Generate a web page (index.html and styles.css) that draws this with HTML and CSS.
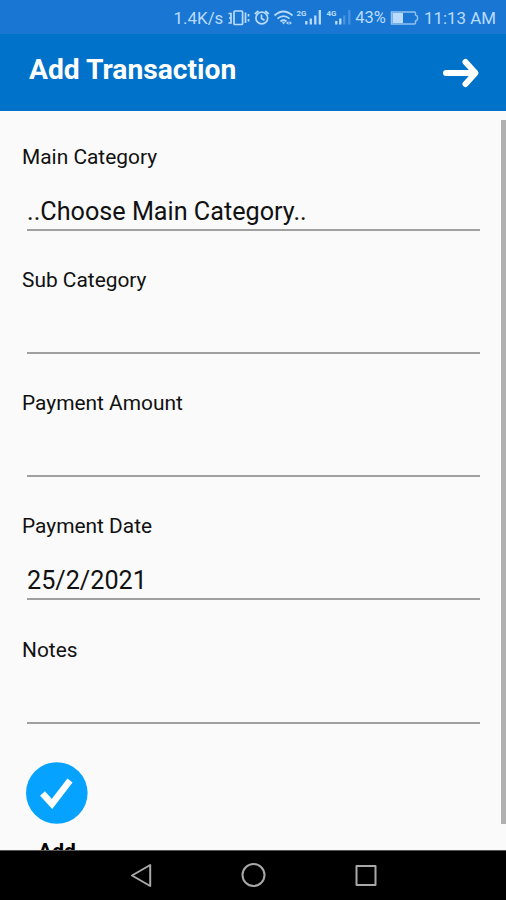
FILE: index.html
```html
<!DOCTYPE html>
<html lang="en">
<head>
  <meta charset="UTF-8" />
  <meta name="viewport" content="width=device-width, initial-scale=1.0"/>
  <title>Add Transaction</title>
  <link rel="stylesheet" href="styles.css">
</head>
<body>
  <div class="status-bar">
    <span class="speed">1.4K/s</span>
    <svg class="status-icons" width="125" height="24" viewBox="228 6 125 24" fill="none" stroke="currentColor" stroke-width="1.7">
      <!-- vibrate -->
      <rect x="235" y="11" width="8.6" height="13.5" rx="1"/>
      <path d="M229.5 13.5h2.500v9.500h-2.500M230 18h2M246.500 12.500v10.500M249.500 14v2.500M249.500 19v2.500"/>
      <!-- alarm -->
      <circle cx="262.8" cy="18" r="5.9"/>
      <path d="M262.5 14.5v4l3 1.8M255.8 14l3.6-3.2M269.8 14l-3.6-3.2"/>
      <!-- wifi -->
      <path d="M275.5 15.5q9-8 18 0M278.5 18.7q6-5.2 12 0M281.5 21.5q3-2.5 6 0"/>
      <path d="M282.8 22.3h3.5l-1.7 2.2zM287 23l2.5-1.8v3.6zM293 23l-2.5-1.8v3.6z" fill="currentColor" stroke="none"/>
      <!-- signal bars -->
      <path d="M307.3 21v3.5M311.8 18.5v6M316.3 15.5v9M320.8 10v14.5M337.3 21v3.5M341.3 18.5v6" stroke-width="2.3"/>
      <path d="M345.3 15.5v9M350.3 10v14.5" stroke-width="2.3" opacity=".3"/>
      <g class="net-type" fill="currentColor" stroke="none">
        <text x="297.5" y="16">2G</text>
        <text x="327.5" y="16">4G</text>
      </g>
    </svg>
    <span class="percent">43%</span>
    <svg class="battery" width="30" height="16" viewBox="0 0 30 16" fill="none">
      <path d="M1.5 2h23q1 0 1 1v2q2 .5 2 2v2q0 1.500-2 2v2q0 1-1 1h-23z" stroke="currentColor" stroke-width="1.5" opacity=".75"/>
      <path d="M2.5 3h10.5v10h-10.5z" fill="currentColor"/>
    </svg>
    <span class="clock">11:13 AM</span>
  </div>

  <div class="header">
    <h1>Add Transaction</h1>
    <svg width="38" height="32" viewBox="0 0 38 32" fill="none" stroke="#fff" stroke-width="6" stroke-linecap="round" stroke-linejoin="round">
      <path d="M4 16h29M23.5 5l10 11-10 11"/>
    </svg>
  </div>

  <div class="content">
    <div class="form">
      <div class="field">
        <div class="label">Main Category</div>
        <div class="value">..Choose Main Category..</div>
      </div>
      <div class="field">
        <div class="label">Sub Category</div>
        <div class="value"></div>
      </div>
      <div class="field">
        <div class="label">Payment Amount</div>
        <div class="value"></div>
      </div>
      <div class="field">
        <div class="label">Payment Date</div>
        <div class="value">25/2/2021</div>
      </div>
      <div class="field">
        <div class="label">Notes</div>
        <div class="value"></div>
      </div>
      <div class="add-button">
        <svg width="62" height="62" viewBox="0 0 62 62">
          <circle cx="30.8" cy="31" r="30.8" fill="#05a3ff"/>
          <path d="M16.5 31.5L26 42l18-23.5" fill="none" stroke="#fff" stroke-width="6.5"/>
        </svg>
        <span>Add</span>
      </div>
    </div>
    <div class="scrollbar"></div>
  </div>

  <div class="nav-bar">
    <svg width="506" height="49" viewBox="0 0 506 49" fill="none" stroke="#a9a7a8" stroke-width="2" stroke-linejoin="round">
      <path d="M132 24.5L150.2 14v21z"/>
      <circle cx="253.5" cy="24" r="11"/>
      <rect x="356.5" y="15" width="19" height="19"/>
    </svg>
  </div>
</body>
</html>
```

FILE: styles.css
```css
body {
  margin: 0;
  font-family: Roboto, sans-serif;
  height: 900px;
  display: flex;
  flex-direction: column;
  overflow: hidden;
  background: #fafafa;
  color: #111;
}

.status-bar {
  height: 34px;
  padding: 1px 10px 0 0;
  box-sizing: border-box;
  display: flex;
  align-items: center;
  justify-content: flex-end;
  background: #1976d2;
  color: #b9dbff;
  font-size: 16.9px;
  white-space: nowrap;
}

.status-icons {
  margin-left: 4px;
}

.net-type {
  font-size: 8px;
  font-weight: bold;
}

.percent {
  margin-left: 3px;
  font-size: 16.5px;
}

.battery {
  margin: 0 4px;
}

.header {
  height: 77px;
  padding: 0 26px 0 29px;
  box-sizing: border-box;
  display: flex;
  align-items: center;
  justify-content: space-between;
  background: #0072c9;
  color: #fff;
}

.header h1 {
  margin: 0 0 6px;
  font-size: 28.2px;
  line-height: 34px;
  font-weight: bold;
}

.content {
  height: 739px;
  display: flex;
  justify-content: space-between;
  overflow: hidden;
}

.form {
  width: 458px;
  padding-left: 22px;
}

.field {
  height: 123.3px;
  padding-top: 31.6px;
  box-sizing: border-box;
}

.label {
  height: 28px;
  line-height: 28px;
  font-size: 20.9px;
}

.value {
  height: 60px;
  margin-left: 5px;
  padding-top: 25px;
  box-sizing: border-box;
  border-bottom: 2px solid #a0a0a0;
  font-size: 25.2px;
  line-height: 32px;
}

.add-button {
  width: 62px;
  margin: 34.5px 0 0 4px;
  display: flex;
  flex-direction: column;
  align-items: center;
  color: #000;
  font-size: 21px;
  font-weight: bold;
}

.add-button span {
  margin-top: 15px;
}

.scrollbar {
  width: 5px;
  height: 704px;
  margin-top: 9px;
  background: #b0b0b0;
}

.nav-bar {
  height: 49px;
  border-top: 1px solid #555;
  background: #000;
}
```
